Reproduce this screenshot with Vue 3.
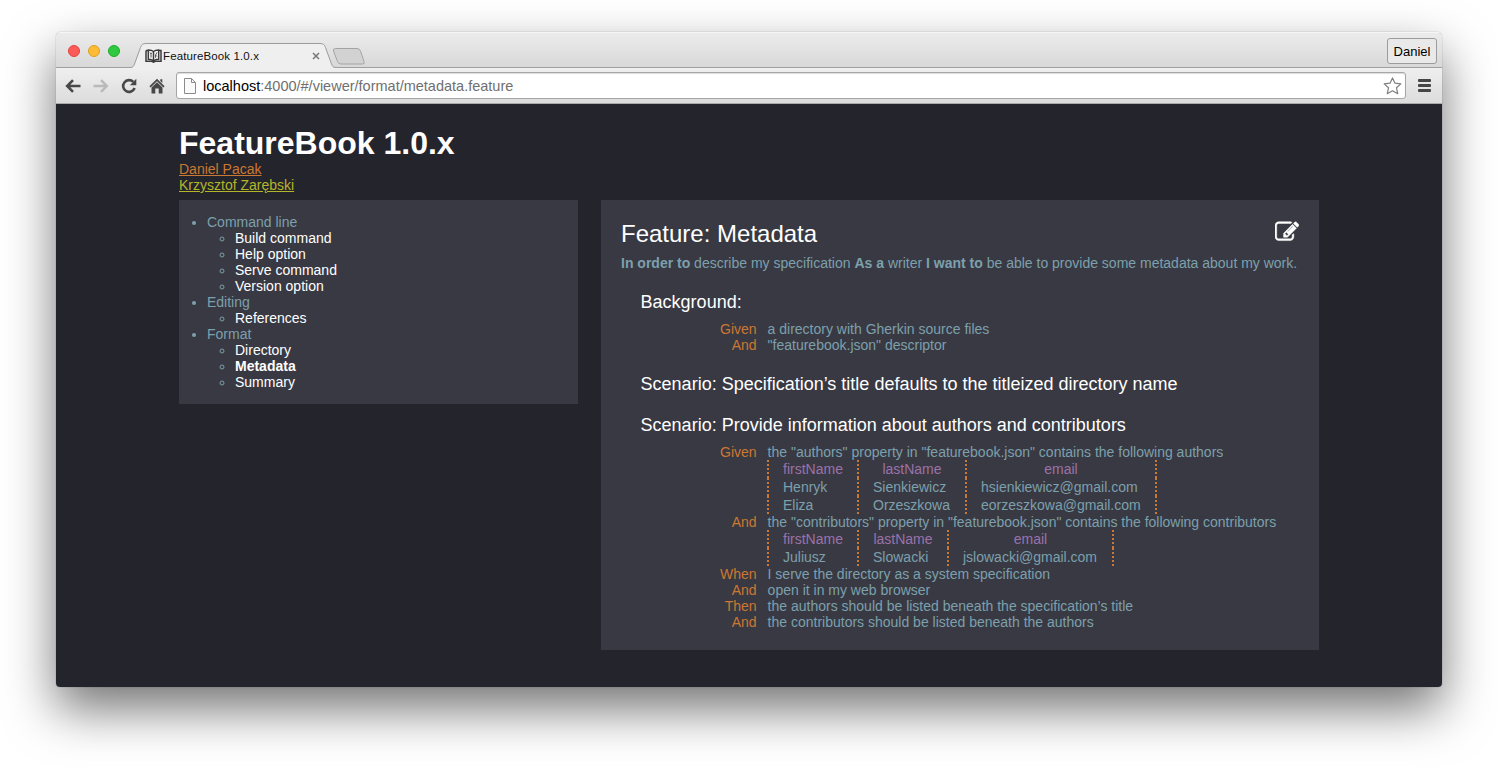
<script setup>
const nav = [
  { title: 'Command line', items: ['Build command', 'Help option', 'Serve command', 'Version option'] },
  { title: 'Editing', items: ['References'] },
  { title: 'Format', items: ['Directory', 'Metadata', 'Summary'] }
]
const current = 'Metadata'
const sections = [
  {
    title: 'Background:',
    steps: [
      { key: 'Given', text: 'a directory with Gherkin source files' },
      { key: 'And', text: '"featurebook.json" descriptor' }
    ]
  },
  { title: 'Scenario: Specification’s title defaults to the titleized directory name', steps: [] },
  {
    title: 'Scenario: Provide information about authors and contributors',
    steps: [
      {
        key: 'Given',
        text: 'the "authors" property in "featurebook.json" contains the following authors',
        kind: 'authors',
        head: ['firstName', 'lastName', 'email'],
        rows: [
          ['Henryk', 'Sienkiewicz', 'hsienkiewicz@gmail.com'],
          ['Eliza', 'Orzeszkowa', 'eorzeszkowa@gmail.com']
        ]
      },
      {
        key: 'And',
        text: 'the "contributors" property in "featurebook.json" contains the following contributors',
        kind: 'contributors',
        head: ['firstName', 'lastName', 'email'],
        rows: [['Juliusz', 'Slowacki', 'jslowacki@gmail.com']]
      },
      { key: 'When', text: 'I serve the directory as a system specification' },
      { key: 'And', text: 'open it in my web browser' },
      { key: 'Then', text: 'the authors should be listed beneath the specification’s title' },
      { key: 'And', text: 'the contributors should be listed beneath the authors' }
    ]
  }
]
</script>

<template>
  <div class="desktop">
    <div class="window">
      <div class="titlebar">
        <div class="lights"><i class="red"></i><i class="yellow"></i><i class="green"></i></div>
        <div class="tab">
          <svg class="tab-shape" width="206" height="26" viewBox="0 0 206 26">
            <path d="M0 24.500C3 24.500 3.500 23.500 4.500 21L10.500 4.500C11.500 1.500 13 .5 16 .5H190C193 .5 194.500 1.500 195.500 4.500L201.500 21C202.500 23.500 203 24.500 206 24.500V26H0Z" fill="#efefef" />
            <path d="M0 24.500C3 24.500 3.500 23.500 4.500 21L10.500 4.500C11.500 1.500 13 .5 16 .5H190C193 .5 194.500 1.500 195.500 4.500L201.500 21C202.500 23.500 203 24.500 206 24.500" fill="none" stroke="#9c9c9c" />
          </svg>
          <div class="tab-content">
            <svg width="17" height="14" viewBox="0 0 17 14" fill="none" stroke="#3b3b3b">
              <path d="M1 1.500H3M14 1.500H16V12.300H10L8.500 13.200L7 12.300H1V1.500" stroke-width="1.500" />
              <path d="M3.300 1C5.500 1 7.200 1.300 8.500 2.500C9.800 1.300 11.500 1 13.700 1V10.300C11.500 10.300 9.800 10.700 8.500 12C7.200 10.700 5.500 10.300 3.300 10.300ZM8.500 2.500V12" stroke-width="1.400" />
              <path d="M5 3.500L6 5L7 3.700M6 5V8.500M12 3.500L10.500 6V8.800M10.500 6L12 7.500" stroke-width=".8" />
            </svg>
            <span class="tab-title">FeatureBook 1.0.x</span>
            <svg class="close" width="8" height="8" viewBox="0 0 8 8"><path d="M1 1l6 6M7 1L1 7" stroke="#777" stroke-width="1.500" /></svg>
          </div>
        </div>
        <svg class="newtab" width="34" height="17" viewBox="0 0 34 17">
          <path d="M3.500 .5H25Q27.500 .5 28.500 3L32 13.500Q33 16 30.500 16H9Q6.500 16 5.500 13.500L1.500 3Q.8 .5 3.500 .5Z" fill="#d2d2d2" stroke="#a4a4a4" />
        </svg>
        <div class="user">Daniel</div>
      </div>
      <div class="toolbar">
        <svg class="ic back" width="16" height="14" viewBox="0 0 16 14" fill="none" stroke="#484848" stroke-width="2.600"><path d="M15.500 7H2.500M8 1.200L2.200 7L8 12.800" /></svg>
        <svg class="ic fwd" width="16" height="14" viewBox="0 0 16 14" fill="none" stroke="#b9b9b9" stroke-width="2.400"><path d="M.5 7H13.500M8 1.200L13.800 7L8 12.800" /></svg>
        <svg class="ic reload" width="16" height="16" viewBox="0 0 16 16"><path d="M12.300 3.900A5.900 5.900 0 1 0 13.600 10" fill="none" stroke="#484848" stroke-width="2.600" /><path d="M15.300 .8V7.200H8.900Z" fill="#484848" /></svg>
        <svg class="ic home" width="16" height="16" viewBox="0 0 16 16" fill="#484848"><path d="M8 .8L15.600 8.300L14.400 9.500L8 3.300L1.600 9.500L.4 8.300ZM8 4.200L13.500 9.500V15.500H9.700V10.500H6.300V15.500H2.500V9.500ZM11.300 1.200H13.300V5L11.300 3Z" /></svg>
        <div class="address">
          <svg width="12" height="16" viewBox="0 0 12 16"><path d="M.5 .5H7.500L11.500 4.500V15.500H.5Z" fill="#fafafa" stroke="#8b8b8b" /><path d="M7.500 .5V4.500H11.500" fill="none" stroke="#8b8b8b" /></svg>
          <span class="url"><b>localhost</b>:4000/#/viewer/format/metadata.feature</span>
          <svg class="star" width="19" height="18" viewBox="0 0 19 18"><path d="M9.500 1L12 6.200L17.800 6.900L13.500 10.800L14.700 16.700L9.500 13.800L4.300 16.700L5.500 10.800L1.200 6.900L7 6.200Z" fill="#fff" stroke="#7f7f7f" stroke-width="1.200" stroke-linejoin="round" /></svg>
        </div>
        <div class="menu"><i></i><i></i><i></i></div>
      </div>
      <div class="page">
        <header>
          <h1>FeatureBook 1.0.x</h1>
          <div><a class="author">Daniel Pacak</a></div>
          <div><a class="contributor">Krzysztof Zarębski</a></div>
        </header>
        <div class="columns">
          <nav>
            <ul>
              <li v-for="group in nav" :key="group.title">
                <span>{{ group.title }}</span>
                <ul>
                  <li v-for="item in group.items" :key="item"><a :class="{ current: item === current }">{{ item }}</a></li>
                </ul>
              </li>
            </ul>
          </nav>
          <main>
            <div class="feature-head">
              <h2>Feature: Metadata</h2>
              <svg class="edit" width="24" height="24" viewBox="0 0 1792 1792" fill="#fff" stroke="#fff" stroke-width="36"><path d="M888 1184l116-116-152-152-116 116v56h96v96h56zm440-720q-16-16-33 1l-350 350q-17 17-1 33t33-1l350-350q17-17 1-33zm80 594v190q0 119-84.500 203.500t-203.500 84.500h-832q-119 0-203.500-84.500t-84.500-203.500v-832q0-119 84.500-203.500t203.500-84.500h832q63 0 117 25 15 7 18 23 3 17-9 29l-49 49q-14 14-32 8-23-6-45-6h-832q-66 0-113 47t-47 113v832q0 66 47 113t113 47h832q66 0 113-47t47-113v-126q0-13 9-22l64-64q15-15 35-7t20 29zm-96-738l288 288-672 672h-288v-288zm444 132l-92 92-288-288 92-92q28-28 68-28t68 28l152 152q28 28 28 68t-28 68z" /></svg>
            </div>
            <p class="story"><b>In order to</b> describe my specification <b>As a</b> writer <b>I want to</b> be able to provide some metadata about my work.</p>
            <section v-for="s in sections" :key="s.title">
              <h3>{{ s.title }}</h3>
              <div v-if="s.steps.length" class="steps">
                <div v-for="(step, i) in s.steps" :key="i" class="step">
                  <span class="keyword">{{ step.key }}</span>
                  <div class="step-body">
                    <div class="text">{{ step.text }}</div>
                    <div v-if="step.rows" class="grid" :class="step.kind">
                      <span v-for="h in step.head" :key="h" class="cell th">{{ h }}</span>
                      <template v-for="row in step.rows" :key="row[0]">
                        <span v-for="c in row" :key="c" class="cell">{{ c }}</span>
                      </template>
                    </div>
                  </div>
                </div>
              </div>
            </section>
          </main>
        </div>
      </div>
    </div>
  </div>
</template>

<style>
html, body { margin: 0; background: #fff; }
</style>

<style scoped>
* { box-sizing: border-box; }
.desktop { width: 1498px; height: 767px; padding: 32px 56px 80px; overflow: hidden; background: #fff; font: 14px/16px "Liberation Sans", Arial, sans-serif; }
.window { height: 655px; display: flex; flex-direction: column; border-radius: 5px 5px 4px 4px; overflow: hidden; box-shadow: 0 0 1px rgba(0,0,0,.55), 0 22px 50px rgba(0,0,0,.55); }
.titlebar { height: 36px; flex: none; display: flex; align-items: flex-start; background: linear-gradient(#ececec, #d8d8d8); border-bottom: 1px solid #a0a0a0; box-shadow: inset 0 1px #f6f6f6; }
.lights { display: flex; gap: 8px; padding: 13px 0 0 12px; }
.lights i { width: 12px; height: 12px; border-radius: 50%; border: 1px solid; }
.red { background: #fc5b57; border-color: #e2443f !important; }
.yellow { background: #fdbc34; border-color: #dfa023 !important; }
.green { background: #2fc93f; border-color: #1dac2b !important; }
.tab { display: grid; width: 206px; height: 26px; margin: 11px 0 -1px 10px; }
.tab > * { grid-area: 1 / 1; }
.tab-content { display: flex; align-items: center; padding-left: 15px; color: #111; font-size: 11.500px; letter-spacing: .12px; }
.tab-title { width: 149px; margin-left: 1px; }
.newtab { margin: 16px 0 0 -4px; }
.user { margin: 6px 5px 0 auto; width: 50px; height: 26px; border: 1px solid #9c9c9c; border-radius: 3px; background: #e9e9e9; text-align: center; line-height: 25px; font-size: 13px; color: #000; }
.toolbar { height: 36px; flex: none; display: flex; align-items: center; background: linear-gradient(#efefef, #dcdcdc); border-bottom: 1px solid #aaa; padding: 0 11px 0 9px; }
.ic { flex: none; }
.fwd { margin-left: 12px; }
.reload { margin-left: 12px; }
.home { margin-left: 12px; }
.address { flex: 1; height: 27px; margin-left: 11px; border: 1px solid #a6a6a6; border-radius: 3px; background: #fff; display: flex; align-items: center; padding: 0 3px 0 7px; box-shadow: inset 0 1px 1px #ddd; }
.url { margin-left: 7px; color: #6f6f6f; white-space: nowrap; font-size: 14.500px; }
.url b { font-weight: normal; color: #000; }
.star { margin-left: auto; }
.menu { width: 13px; margin-left: 12px; display: grid; gap: 2px; }
.menu i { height: 3px; border-radius: 1px; background: #454545; }
.page { flex: 1; background: #24242d; padding: 20px 123px 0; color: #7ca0ac; }
h1 { margin: 0; height: 37px; line-height: 38px; font-size: 32px; color: #fff; white-space: nowrap; }
header a { text-decoration: underline; }
.author { color: #cb7832; }
.contributor { color: #b5b52a; }
.columns { display: flex; justify-content: space-between; align-items: flex-start; margin-top: 7px; }
nav { width: 399px; height: 204px; padding: 14px; background: #393943; }
nav ul { margin: 0; padding-left: 14px; list-style: disc; }
nav ul ul { padding-left: 28px; list-style: circle; }
nav a { color: #fff; }
nav a.current { font-weight: bold; }
main { width: 718px; height: 450px; padding: 20px; background: #393943; }
.feature-head { display: flex; justify-content: space-between; height: 35px; }
h2 { margin: 0; font-size: 24px; line-height: 28px; font-weight: normal; color: #fff; }
.story { margin: 0; white-space: nowrap; }
section { padding: 20px 0 0 19.600px; }
h3 { margin: 0; height: 21px; font-size: 18px; line-height: 22px; font-weight: normal; color: #fff; white-space: nowrap; }
.steps { padding: 9px 0 0; }
.step { display: flex; }
.keyword { width: 116px; margin-right: 11px; text-align: right; color: #cb7832; }
.text { white-space: nowrap; }
.grid { display: grid; width: max-content; grid-auto-rows: 18px; margin-left: -.6px; }
.authors { grid-template-columns: 90px 108px 192px; }
.contributors { grid-template-columns: 90px 90px 167px; }
.cell { border-left: 2px dotted #cb7832; padding-left: 14px; line-height: 18px; white-space: nowrap; }
.cell:nth-child(3n) { border-right: 2px dotted #cb7832; }
.th { padding: 0; text-align: center; color: #9b72a9; }
</style>
